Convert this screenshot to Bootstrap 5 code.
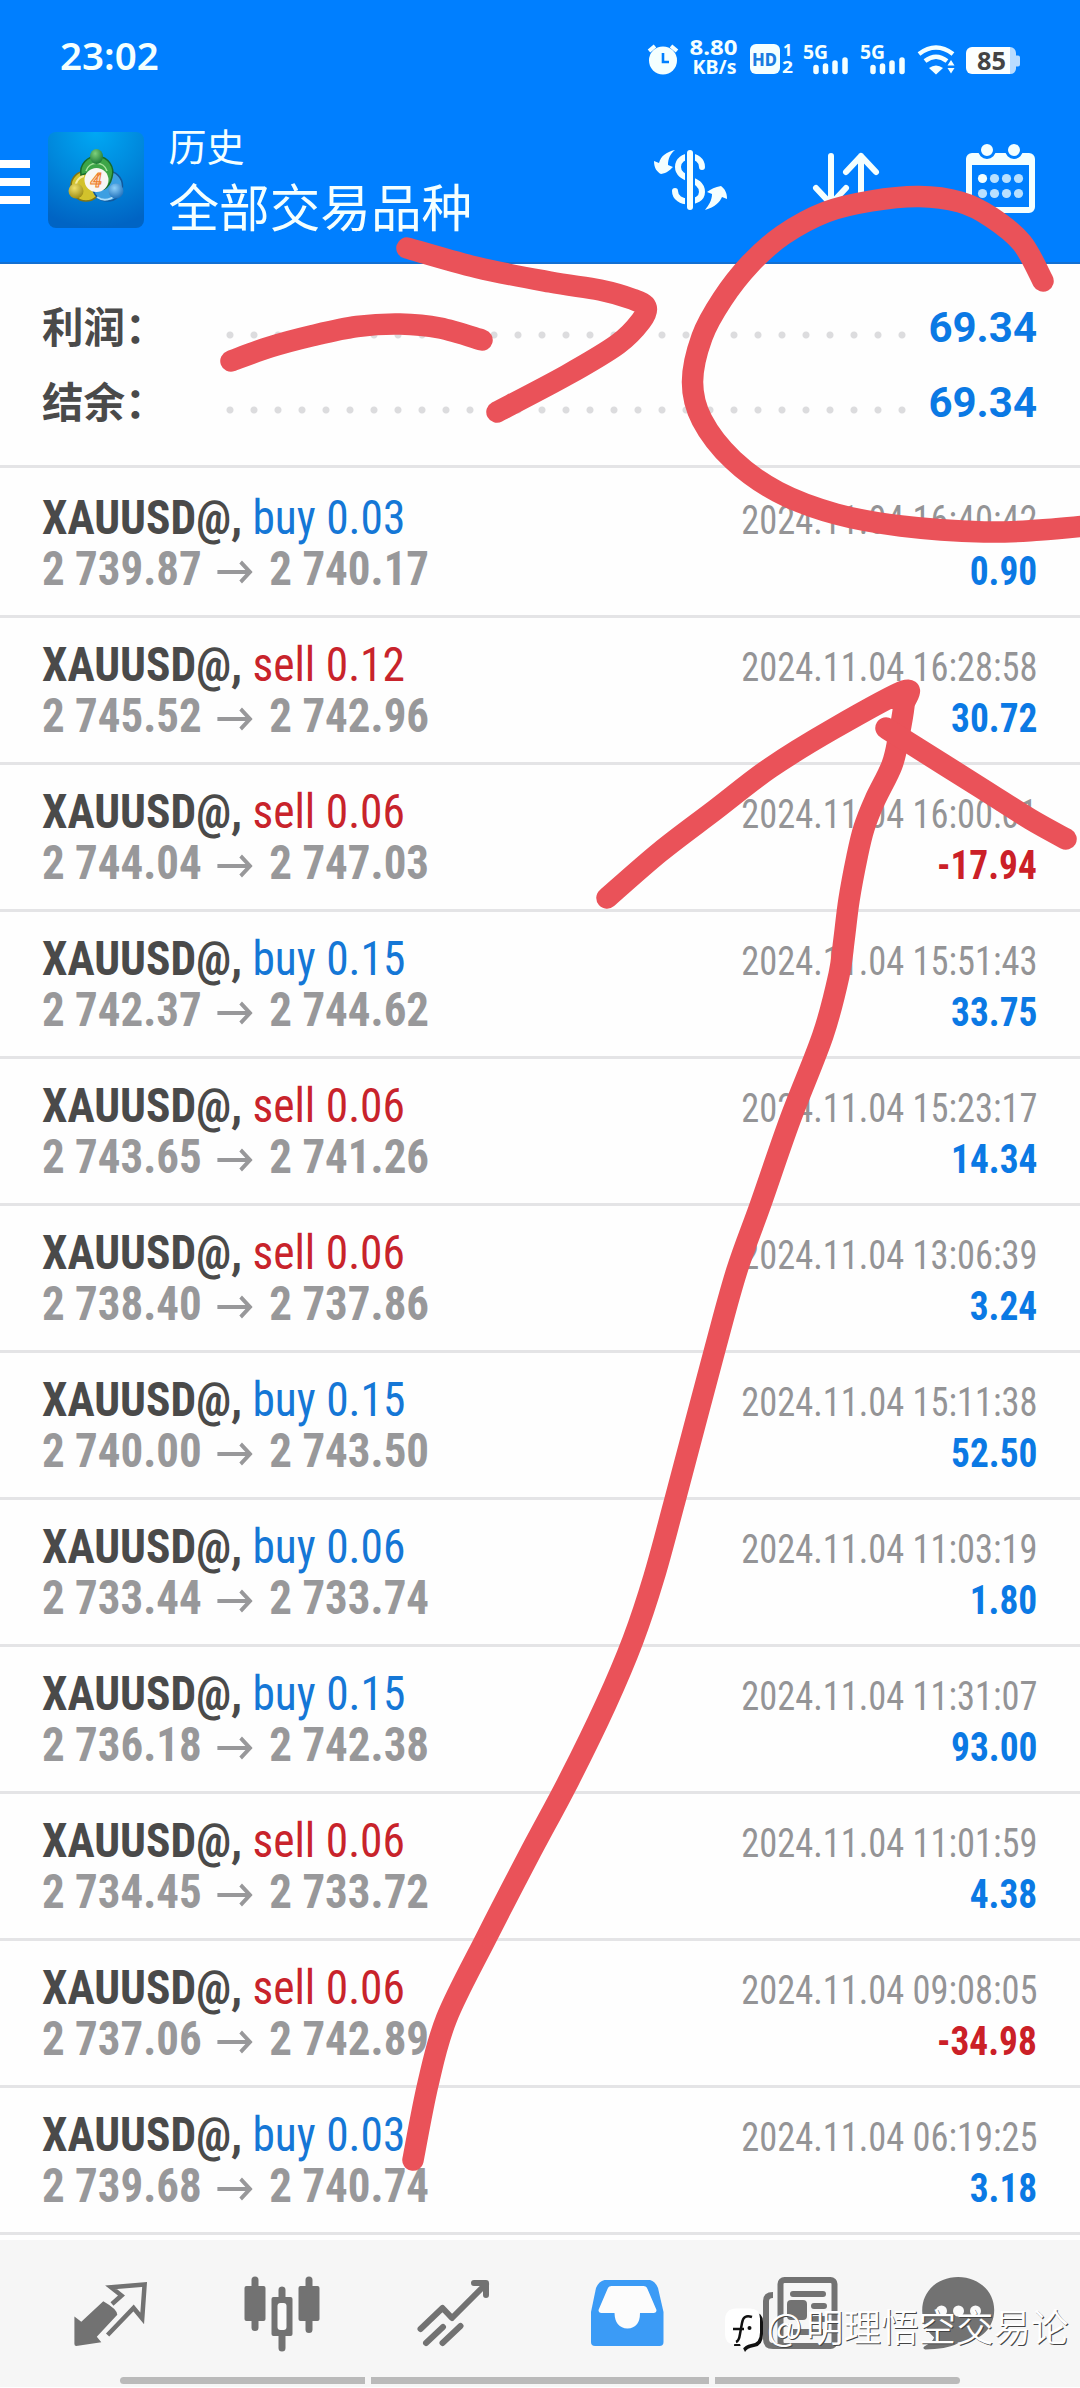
<!DOCTYPE html>
<html lang="zh-CN">
<head>
<meta charset="utf-8">
<meta name="viewport" content="width=device-width, initial-scale=1">
<title>历史</title>
<link href="https://cdn.jsdelivr.net/npm/bootstrap@5.3.0/dist/css/bootstrap.min.css" rel="stylesheet">
<style>
  body { font-family: Roboto, "Noto Sans CJK SC", sans-serif; background: #fefefe; width: 1080px; }
  .screen { width: 1080px; height: 2388px; }
  .topbar { height: 264px; background: #007fff; border-bottom: 2px solid #1270d2; color: #f4ffff; }
  .status { height: 114px; }
  .clock { font: 600 38.5px/1 "Noto Sans", sans-serif; padding-left: 60px; padding-top: 36px; }
  .status svg text { font-family: "Noto Sans", sans-serif; font-weight: 700; fill: #f4ffff; }
  .appbar { height: 148px; }
  .burger { width: 30px; margin-top: 46px; gap: 10px; }
  .burger span { height: 8px; background: #fff; }
  .logo { margin: 18px 0 0 18px; }
  .titles { margin-left: 24.5px; font-family: "Noto Sans CJK SC", sans-serif; font-weight: 400; white-space: nowrap; }
  .t-one { font-size: 38px; line-height: 56px; margin-top: 3px; }
  .t-two { font-size: 50.6px; line-height: 66px; margin-top: -1px; }
  .totals { height: 204px; border-bottom: 3px solid #e4e4e6; padding: 27px 43px 0 42px; }
  .total-line { height: 75px; }
  .total-name { font: 700 41.5px/75px "Noto Sans CJK SC", sans-serif; color: #4a4a4a; width: 184px; white-space: nowrap; margin-top: -3px; }
  .leader { width: 680px; height: 8px; margin-top: 40px; background: radial-gradient(circle at 4px 4px, #dcdcde 3px, transparent 4px) 0 0 / 24px 8px repeat-x; }
  .total-sum { font: 700 42px/75px Roboto, sans-serif; color: #0b79e4; margin-top: -1px; }
  .deal { height: 147px; border-bottom: 3px solid #e4e4e6; padding: 21px 43px 0 42px; }
  .deal:first-child { height: 150px; padding-top: 24px; }
  .deal-line { height: 51px; line-height: 51px; font-family: "Roboto Condensed", Roboto, sans-serif; white-space: nowrap; }
  .sq-l { transform: scaleX(.946); transform-origin: 0 50%; font-size: 48px; }
  .sq-r { transform: scaleX(.91); transform-origin: 100% 50%; font-size: 40px; }
  .sym { font-weight: 700; color: #4a4a4a; }
  .px { font-weight: 700; color: #98989a; transform: scaleX(.937); }
  .px svg { width: 38px; height: 26px; margin: 0 18px 0 16px; }
  .when { color: #949496; }
  .buy { color: #1577d6; }
  .sell { color: #c8232b; }
  .gain { font-weight: 700; color: #0b79e4; transform: scaleX(.935); }
  .loss { font-weight: 700; color: #cb2027; transform: scaleX(.935); }
  .tabs { margin-top: 5px; height: 137px; background: #f6f6f6; padding-left: 23px; }
  .homebar { height: 10px; background: #f6f6f6; padding-left: 120px; gap: 6px; }
  .homebar span { height: 7px; background: #bababa; width: 245px; }
  .homebar span:nth-child(2) { width: 338px; }
  .ink { left: 0; top: 0; pointer-events: none; }
  .wm { left: 722px; top: 2300px; width: 358px; height: 58px; }
  .wm-text { font: 350 37.5px/50px "Noto Sans CJK SC", sans-serif; color: #fff; text-shadow: 1px 1px 0 #444; margin-left: 1px; white-space: nowrap; }
  .wm-text span { letter-spacing: 4px; }
</style>
<script src="https://cdn.jsdelivr.net/npm/bootstrap@5.3.0/dist/js/bootstrap.bundle.min.js"></script>
</head>
<body>
<div class="screen position-relative overflow-hidden d-flex flex-column">
  <header class="topbar flex-shrink-0">
    <div class="status d-flex align-items-start">
      <div class="clock">23:02</div>
      <div class="d-flex ms-auto pe-5">
        <!-- alarm -->
        <svg width="40" height="114" viewBox="646 0 40 114"><circle cx="663" cy="60.500" r="14" fill="#f4ffff"/><path d="M649 51l6-5M677 51l-6-5" stroke="#f4ffff" stroke-width="4"/><path d="M663 53v9h6" fill="none" stroke="#007fff" stroke-width="2.600"/></svg>
        <svg width="62" height="114" viewBox="686 0 62 114"><text x="689.500" y="55" font-size="20.500" textLength="48" lengthAdjust="spacingAndGlyphs">8.80</text><text x="692.500" y="73.500" font-size="19.500" textLength="44" lengthAdjust="spacingAndGlyphs">KB/s</text></svg>
        <svg width="53" height="114" viewBox="748 0 53 114"><rect x="750" y="44" width="30" height="30" rx="6" fill="#f4ffff"/><text x="752" y="65.500" font-size="18" textLength="25" lengthAdjust="spacingAndGlyphs" style="fill:#1a7be0;font-weight:800">HD</text><text x="783" y="56" font-size="16">1</text><text x="782" y="73" font-size="16" textLength="11" lengthAdjust="spacingAndGlyphs">2</text></svg>
        <svg width="57" height="114" viewBox="801 0 57 114"><text x="803" y="58.500" font-size="20" textLength="25" lengthAdjust="spacingAndGlyphs">5G</text><path d="M816 67.500v4M825.500 66v5.500M835 63v8.500M845 60v11.500" stroke="#f4ffff" stroke-width="5.500" stroke-linecap="round"/></svg>
        <svg width="57" height="114" viewBox="801 0 57 114"><text x="803" y="58.500" font-size="20" textLength="25" lengthAdjust="spacingAndGlyphs">5G</text><path d="M816 67.500v4M825.500 66v5.500M835 63v8.500M845 60v11.500" stroke="#f4ffff" stroke-width="5.500" stroke-linecap="round"/></svg>
        <svg width="46" height="114" viewBox="915 0 46 114"><g fill="none" stroke="#f4ffff" stroke-width="4.500"><path d="M919 54q17-13 34 0"/><path d="M925 61q11-8.500 22 0"/></g><path d="M929 68q7-5 14 0l-7 6.500z" fill="#f4ffff"/><path d="M951 60l3.500 5.500h-7zM951 73.500l3.500-5.500h-7z" fill="#f4ffff"/></svg>
        <svg width="71" height="114" viewBox="961 0 71 114"><path d="M972 47h38v27h-38a6 6 0 0 1-6-6v-15a6 6 0 0 1 6-6z" fill="#fbffff"/><path d="M1010 47a6 6 0 0 1 6 6v2.500h2a2 2 0 0 1 2 2v7a2 2 0 0 1-2 2h-2v2.500a6 6 0 0 1-6 5z" fill="#b9dcff"/><text x="977" y="69.500" font-size="25" textLength="29" lengthAdjust="spacingAndGlyphs" style="fill:#444">85</text></svg>
      </div>
    </div>
    <div class="appbar d-flex">
      <div class="burger d-flex flex-column"><span></span><span></span><span></span></div>
      <svg class="logo flex-shrink-0" width="96" height="96" viewBox="48 12 96 96">
        <defs>
          <radialGradient id="sky" cx=".5" cy="0" r="1"><stop offset="0" stop-color="#00a8f4"/><stop offset=".5" stop-color="#0088dc"/><stop offset="1" stop-color="#0064c4"/></radialGradient>
          <radialGradient id="gr" cx=".4" cy=".3" r=".8"><stop offset="0" stop-color="#7ed07c"/><stop offset="1" stop-color="#0f6d2c"/></radialGradient>
          <radialGradient id="ye" cx=".4" cy=".3" r=".8"><stop offset="0" stop-color="#f1e16a"/><stop offset="1" stop-color="#94830c"/></radialGradient>
          <radialGradient id="bl" cx=".4" cy=".3" r=".8"><stop offset="0" stop-color="#8ed0fa"/><stop offset="1" stop-color="#1265b4"/></radialGradient>
        </defs>
        <rect x="48" y="12" width="96" height="96" rx="8" fill="url(#sky)"/>
        <circle cx="86" cy="66" r="15" fill="#d2c22c" stroke="#807414" stroke-width="1.500"/>
        <circle cx="107.500" cy="66" r="15" fill="#3c9fe2" stroke="#12599c" stroke-width="1.500"/>
        <path d="M81 55a16 16 0 1 1 31 2q-2 9-8 12l-16-16z" fill="#3da548" stroke="#176a2a" stroke-width="1.500"/>
        <path d="M86 51a11 11 0 0 1 21 0" fill="none" stroke="#a6e29c" stroke-width="1.500"/>
        <path d="M76 70a11 11 0 0 1 8-14" fill="none" stroke="#f6eda0" stroke-width="2"/>
        <path d="M97 77a14 14 0 0 0 22-10" fill="none" stroke="#a9dcfb" stroke-width="2"/>
        <ellipse cx="96.500" cy="36.500" rx="6.500" ry="7.500" fill="url(#gr)"/><circle cx="76" cy="71" r="7.500" fill="url(#ye)"/><circle cx="116" cy="71" r="7.500" fill="url(#bl)"/>
        <circle cx="96.500" cy="60" r="12" fill="#f8f6f4"/>
        <text x="96" y="67" font-size="20" font-family="Roboto" font-weight="700" font-style="italic" text-anchor="middle" fill="#fbe1c4" stroke="#ee7d2c" stroke-width="1">4</text>
      </svg>
      <div class="titles">
        <div class="t-one">历史</div>
        <div class="t-two">全部交易品种</div>
      </div>
      <div class="d-flex ms-auto">
        <svg width="142" height="120" viewBox="621 114 142 120" fill="none" stroke="#f4ffff" stroke-width="6">
          <path d="M702 167c0-14-24-14-24 0c0 14 24 10 24 25c0 13-27 13-27-1" stroke-linecap="round"/><path d="M690 150v60" stroke="#007fff" stroke-width="10"/><path d="M690 153v54" stroke-linecap="round"/>
          <path d="M675 150c-9 2-14 6-16 13l-5-2c0 7 3 11 7 13c6-1 9-4 12-7l-5-2c0-6 2-11 7-15zM705 210c10-3 15-8 17-13l5 2c0-6-2-10-6-13c-6 1-10 3-14 6l5 2c0 6-3 11-7 16z" fill="#f4ffff" stroke="none"/>
        </svg>
        <svg width="168" height="120" viewBox="763 114 168 120" fill="none" stroke="#f4ffff" stroke-width="6" stroke-linecap="round" stroke-linejoin="round"><path d="M831 156v48M816 188l15 16l15-16M861 207v-51M846 172l15-16l15 16"/></svg>
        <svg width="149" height="120" viewBox="931 114 149 120">
          <rect x="969" y="156" width="63" height="54" rx="3" fill="none" stroke="#f4ffff" stroke-width="6"/><path d="M968 156h64v9h-64z" fill="#f4ffff"/>
          <g fill="#f4ffff" stroke="#007fff" stroke-width="3"><circle cx="987" cy="150" r="7.500"/><circle cx="1014" cy="150" r="7.500"/></g>
          <g fill="#b8e0ff"><circle cx="982.500" cy="178.500" r="4.600" fill="#f4ffff"/><circle cx="994.500" cy="178.500" r="4.600"/><circle cx="1006.500" cy="178.500" r="4.600"/><circle cx="1018.500" cy="178.500" r="4.600"/><circle cx="982.500" cy="193.500" r="4.600"/><circle cx="994.500" cy="193.500" r="4.600"/><circle cx="1006.500" cy="193.500" r="4.600"/><circle cx="1018.500" cy="193.500" r="4.600"/></g>
        </svg>
      </div>
    </div>
  </header>

  <section class="totals flex-shrink-0">
    <div class="total-line d-flex"><span class="total-name">利润：</span><span class="leader"></span><span class="total-sum ms-auto">69.34</span></div>
    <div class="total-line d-flex"><span class="total-name">结余：</span><span class="leader"></span><span class="total-sum ms-auto">69.34</span></div>
  </section>

  <main id="deals" class="flex-shrink-0"></main>

  <nav class="tabs d-flex flex-shrink-0">
    <svg width="172.500" height="137" viewBox="23 2240 172.500 137" fill="#727272"><path d="M74.400 2316.500l6.900 5.200l22-20.500q14 8 14 13.500l-20.500 22l4.500 5.600l-25 3.700q-1.900 0-1.900-2z"/><path d="M112 2304l9.500-8.500l-10.500-8.300l33.600-2.700l-2.400 34l-8.600-10.500l-26 27" fill="none" stroke="#727272" stroke-width="4.500"/></svg>
    <svg width="172.500" height="137" viewBox="195.500 2240 172.500 137" fill="#727272"><rect x="244" y="2286" width="21" height="35" rx="2"/><rect x="298" y="2286" width="21" height="35" rx="2"/><path d="M254.500 2280v47.500M308.500 2280v49.500M281.500 2290v58" stroke="#727272" stroke-width="7" stroke-linecap="round"/><rect x="271" y="2297" width="21" height="39" rx="2"/><rect x="277" y="2303" width="9" height="27" rx="3" fill="#fafafa"/></svg>
    <svg width="172.500" height="137" viewBox="368 2240 172.500 137" fill="none" stroke="#727272" stroke-width="6" stroke-linecap="round" stroke-linejoin="round"><path d="M420.500 2329l22-21l9.500 10l34-34M474 2283h12v12M426 2343l17-16M442.500 2343l18-17"/></svg>
    <svg width="172.500" height="137" viewBox="540.500 2240 172.500 137"><path d="M604 2280h45.500q5 1 8 8l5.500 24v30q0 4-4 4h-64.500q-4 0-4-4v-30l5-24q3-7 8.500-8z" fill="#3b9bf6"/><path d="M611 2286h32q3 0 4 3l9 21q0 3-3 3h-13.500q0 15-12.500 15.500q-12.500-.5-13-15.500h-13q-3 0-3-3l9-21q1-3 4-3z" fill="#fcfcfc"/></svg>
    <svg width="172.500" height="137" viewBox="713 2240 172.500 137" fill="none" stroke="#727272" stroke-width="6"><rect x="780.500" y="2280" width="54" height="66" rx="4"/><path d="M773 2295q-7 0-7 6v38q0 7 7 7h12" /><path d="M793 2294h30M814 2306h10M814 2319h10" stroke-linecap="round"/><rect x="790" y="2303" width="14" height="14" rx="1" fill="#727272"/><path d="M793 2332h30"/></svg>
    <svg width="171" height="137" viewBox="885.500 2240 171 137" fill="#727272"><path d="M957.700 2277c20 0 36 14 36 33c0 20-17 33-36 33c-8 5-20 6-33 6.500q-3-1-1-3q8-4 10-9c-8-7-12-15-12-27c0-20 16-33.500 36-33.500z"/><g fill="#fafafa"><circle cx="941" cy="2311" r="5.500"/><circle cx="958" cy="2311" r="5.500"/><circle cx="975" cy="2311" r="5.500"/></g></svg>
  </nav>
  <div class="homebar d-flex flex-shrink-0"><span class="rounded-start-pill"></span><span></span><span class="rounded-end-pill"></span></div>

  <!-- hand-drawn marker strokes -->
  <svg class="ink position-absolute" width="1080" height="2388" viewBox="0 0 1080 2388" fill="none" stroke="#ea5259" stroke-width="21.500" stroke-linecap="round" stroke-linejoin="round">
    <path data-pts="231,361 270,347 313,335.500 357,326.500 400,324 440,328 482,340"/>
    <path data-pts="407,248 477,267.500 550,282 600,290 632,299 646,307 641,321 618,344 567,375 497,412"/>
    <path data-pts="1043,281 1022,243 991,217 960,202 919,196.500 871,201 826,212 783,235 750,264 722.500,299 702,337 692.500,382 702,420 733,460 778,492 836,514 901,526 984,532 1040,530 1095,525"/>
    <path data-pts="607,898 660,852 715,810 770,768 833,729 904,691 904,705 899,735 892,765 875,800 864,828 857,857 849,900 844,940 839,975 823,1035 790,1120 760,1206 736.700,1271 715,1349 675,1500 654,1577 633,1640 606,1704 569,1780 528,1857 486.700,1937 446.700,2018 428,2084 413,2160"/>
    <path data-pts="886,728 900,737 981,788 1030,819 1066,839"/>
  </svg>

  <div class="wm position-absolute d-flex">
    <svg width="44" height="58" viewBox="722 2300 44 58"><path d="M738 2312h15q10 0 10 10v12q0 12-9 13q-7 1-9 5l-3-6h-8z" fill="#111"/><path d="M736 2308.500h14q10 0 10 10v14q0 11-9 11.500q-6 1-9 6l-2-6h-6q-9 0-9-10v-14q0-11 11-11.500z" fill="#fff"/><path d="M752 2317c-6-2-9 0-10 6l-2 11q-1 7-4 8M733 2329h11" fill="none" stroke="#111" stroke-width="2.500"/><circle cx="749.500" cy="2328" r="2" fill="#111"/></svg>
    <div class="wm-text"><span>@</span>明理悟空交易论</div>
  </div>
</div>

<script>
  const deals = [
    ['buy', '0.03', '2 739.87', '2 740.17', '16:40:42', '0.90'],
    ['sell', '0.12', '2 745.52', '2 742.96', '16:28:58', '30.72'],
    ['sell', '0.06', '2 744.04', '2 747.03', '16:00:01', '-17.94'],
    ['buy', '0.15', '2 742.37', '2 744.62', '15:51:43', '33.75'],
    ['sell', '0.06', '2 743.65', '2 741.26', '15:23:17', '14.34'],
    ['sell', '0.06', '2 738.40', '2 737.86', '13:06:39', '3.24'],
    ['buy', '0.15', '2 740.00', '2 743.50', '15:11:38', '52.50'],
    ['buy', '0.06', '2 733.44', '2 733.74', '11:03:19', '1.80'],
    ['buy', '0.15', '2 736.18', '2 742.38', '11:31:07', '93.00'],
    ['sell', '0.06', '2 734.45', '2 733.72', '11:01:59', '4.38'],
    ['sell', '0.06', '2 737.06', '2 742.89', '09:08:05', '-34.98'],
    ['buy', '0.03', '2 739.68', '2 740.74', '06:19:25', '3.18']
  ];
  document.getElementById('deals').innerHTML = deals.map(([side, lot, from, to, time, sum]) => `
    <article class="deal">
      <div class="deal-line d-flex justify-content-between align-items-baseline">
        <div class="sq-l"><span class="sym">XAUUSD@,</span> <span class="${side}">${side} ${lot}</span></div>
        <div class="sq-r when">2024.11.04 ${time}</div>
      </div>
      <div class="deal-line d-flex justify-content-between align-items-baseline">
        <div class="sq-l px">${from}<svg viewBox="0 0 38 26" fill="none" stroke="#98989a" stroke-width="4"><path d="M0 13h35M25 3l10 10l-10 10"/></svg>${to}</div>
        <div class="sq-r ${sum[0] === '-' ? 'loss' : 'gain'}">${sum}</div>
      </div>
    </article>`).join('');

  /* smooth each marker stroke through its sampled points */
  document.querySelectorAll('[data-pts]').forEach(p => {
    const q = p.dataset.pts.split(' ').map(s => s.split(',').map(Number));
    let d = 'M' + q[0];
    for (let i = 0; i < q.length - 1; i++) {
      const a = q[i - 1] || q[i], b = q[i], c = q[i + 1], e = q[i + 2] || c;
      d += `C${b[0] + (c[0] - a[0]) / 6},${b[1] + (c[1] - a[1]) / 6} ${c[0] - (e[0] - b[0]) / 6},${c[1] - (e[1] - b[1]) / 6} ${c}`;
    }
    p.setAttribute('d', d);
  });
</script>
</body>
</html>
